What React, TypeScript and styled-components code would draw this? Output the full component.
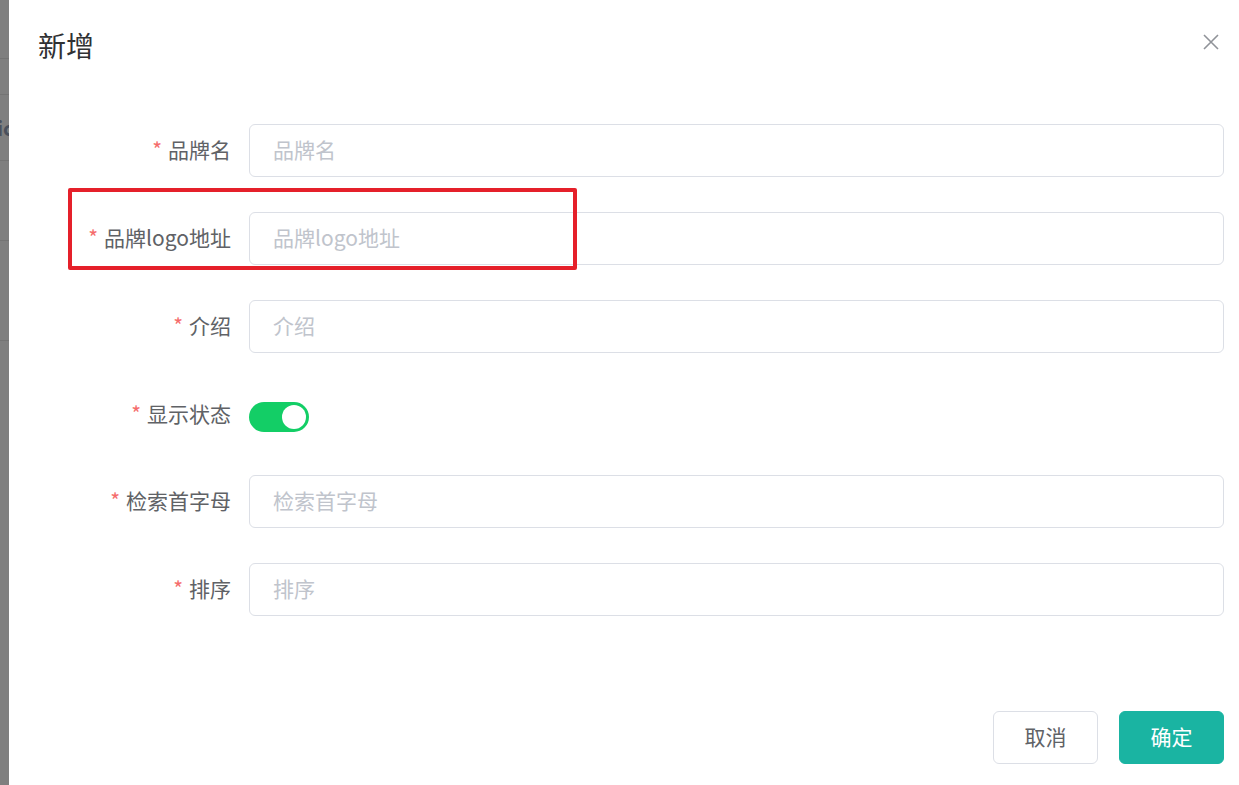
import React from 'react';
import styled, { createGlobalStyle } from 'styled-components';

const GlobalStyle = createGlobalStyle`
  html, body {
    margin: 0;
    padding: 0;
    background: #7f7f7f;
    font-family: 'Noto Sans CJK SC', 'Noto Sans', sans-serif;
  }
`;

const Screen = styled.div`
  display: flex;
  width: 1239px;
  height: 785px;
  overflow: hidden;
`;

const PageStrip = styled.div`
  width: 9px;
  flex-shrink: 0;
  overflow: hidden;
  background: #7f7f7f;
  display: flex;
  flex-direction: column;
`;

const StripRow = styled.div<{ h: number }>`
  height: ${(p) => p.h}px;
  flex-shrink: 0;
  border-bottom: 1px solid #747474;
  box-sizing: border-box;
  display: flex;
  align-items: center;
  font-size: 20px;
  font-weight: 600;
  color: #4a505c;
  white-space: nowrap;
  text-indent: -3px;
`;

const Dialog = styled.div`
  position: relative;
  flex: 1;
  background: #ffffff;
  display: flex;
  flex-direction: column;
  padding: 30px 15px 0 29px;
`;

const Header = styled.div`
  display: flex;
  align-items: center;
  justify-content: space-between;
  height: 30px;
`;

const Title = styled.div`
  font-size: 28px;
  line-height: 30px;
  color: #303133;
`;

const CloseButton = styled.button`
  border: none;
  background: none;
  padding: 0;
  margin-right: 5px;
  margin-top: -6px;
  width: 16px;
  height: 16px;
  display: flex;
  cursor: pointer;
`;

const Form = styled.div`
  margin-top: 64px;
  display: flex;
  flex-direction: column;
  gap: 35px;
`;

const Row = styled.div<{ h?: number }>`
  display: flex;
  align-items: center;
  height: ${(p) => p.h ?? 53}px;
`;

const Label = styled.label`
  width: 211px;
  padding-right: 18px;
  padding-bottom: 3px;
  box-sizing: border-box;
  text-align: right;
  font-size: 21px;
  color: #606266;
  flex-shrink: 0;
  white-space: nowrap;

  &::before {
    content: '*';
    color: #f56c6c;
    margin-right: 6px;
  }
`;

const Input = styled.input`
  flex: 1;
  height: 53px;
  box-sizing: border-box;
  border: 1px solid #dcdfe6;
  border-radius: 6px;
  padding: 0 23px 3px;
  font-size: 21px;
  font-family: inherit;
  color: #606266;
  outline: none;

  &::placeholder {
    color: #c0c4cc;
  }
`;

const Switch = styled.span<{ on: boolean }>`
  position: relative;
  width: 60px;
  height: 30px;
  border-radius: 15px;
  background: ${(p) => (p.on ? '#13ce66' : '#dcdfe6')};
  margin-top: 5px;

  &::after {
    content: '';
    position: absolute;
    top: 3px;
    left: ${(p) => (p.on ? '33px' : '3px')};
    width: 24px;
    height: 24px;
    border-radius: 50%;
    background: #ffffff;
  }
`;

const Footer = styled.div`
  margin-top: 95px;
  display: flex;
  justify-content: flex-end;
  gap: 21px;
`;

const Button = styled.button<{ primary?: boolean }>`
  width: 105px;
  height: 53px;
  border-radius: 6px;
  font-size: 21px;
  font-family: inherit;
  padding: 0 0 3px;
  cursor: pointer;
  border: 1px solid ${(p) => (p.primary ? '#1ab4a2' : '#dcdfe6')};
  background: ${(p) => (p.primary ? '#1ab4a2' : '#ffffff')};
  color: ${(p) => (p.primary ? '#ffffff' : '#606266')};
`;

const Highlight = styled.div`
  position: absolute;
  left: 59px;
  top: 188px;
  width: 509px;
  height: 82px;
  box-sizing: border-box;
  border: 4px solid #e5202a;
  border-radius: 2px;
  pointer-events: none;
`;

const fields = [
  { label: '品牌名' },
  { label: '品牌logo地址' },
  { label: '介绍' },
  { label: '显示状态', toggle: true },
  { label: '检索首字母' },
  { label: '排序' },
];

export default function App() {
  return (
    <>
      <GlobalStyle />
      <Screen>
        <PageStrip>
          <StripRow h={59} />
          <StripRow h={36} />
          <StripRow h={66}>ic</StripRow>
          <StripRow h={80} />
          <StripRow h={100} />
        </PageStrip>
        <Dialog>
          <Header>
            <Title>新增</Title>
            <CloseButton aria-label="close">
              <svg width="16" height="16" viewBox="0 0 16 16">
                <path d="M1 1 L15 15 M15 1 L1 15" stroke="#909399" strokeWidth="1.6" fill="none" />
              </svg>
            </CloseButton>
          </Header>
          <Form>
            {fields.map((f) =>
              f.toggle ? (
                <Row key={f.label} h={52}>
                  <Label>{f.label}</Label>
                  <Switch on />
                </Row>
              ) : (
                <Row key={f.label}>
                  <Label>{f.label}</Label>
                  <Input placeholder={f.label} />
                </Row>
              )
            )}
          </Form>
          <Footer>
            <Button>取消</Button>
            <Button primary>确定</Button>
          </Footer>
          <Highlight />
        </Dialog>
      </Screen>
    </>
  );
}
